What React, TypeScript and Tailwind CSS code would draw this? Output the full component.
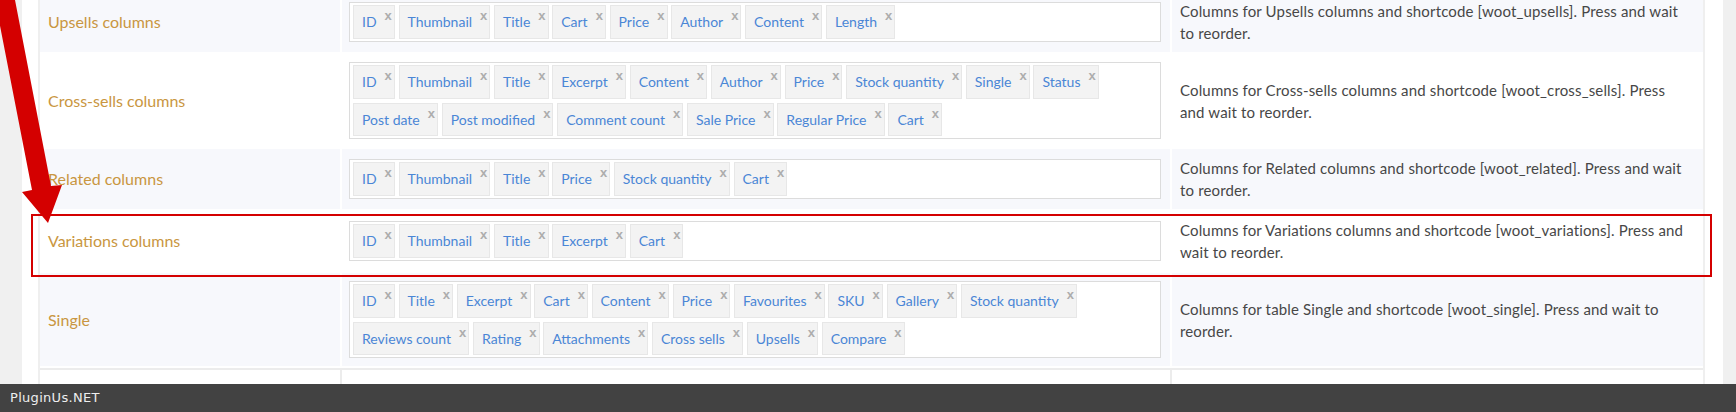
type Row = {
  label: string;
  chips: string[];
  desc: [string, string];
  shaded: boolean;
};

const rows: Row[] = [
  {
    label: 'Upsells columns',
    chips: ['ID', 'Thumbnail', 'Title', 'Cart', 'Price', 'Author', 'Content', 'Length'],
    desc: ['Columns for Upsells columns and shortcode [woot_upsells]. Press and wait', 'to reorder.'],
    shaded: true,
  },
  {
    label: 'Cross-sells columns',
    chips: [
      'ID',
      'Thumbnail',
      'Title',
      'Excerpt',
      'Content',
      'Author',
      'Price',
      'Stock quantity',
      'Single',
      'Status',
      'Post date',
      'Post modified',
      'Comment count',
      'Sale Price',
      'Regular Price',
      'Cart',
    ],
    desc: ['Columns for Cross-sells columns and shortcode [woot_cross_sells]. Press', 'and wait to reorder.'],
    shaded: false,
  },
  {
    label: 'Related columns',
    chips: ['ID', 'Thumbnail', 'Title', 'Price', 'Stock quantity', 'Cart'],
    desc: ['Columns for Related columns and shortcode [woot_related]. Press and wait', 'to reorder.'],
    shaded: true,
  },
  {
    label: 'Variations columns',
    chips: ['ID', 'Thumbnail', 'Title', 'Excerpt', 'Cart'],
    desc: ['Columns for Variations columns and shortcode [woot_variations]. Press and', 'wait to reorder.'],
    shaded: false,
  },
  {
    label: 'Single',
    chips: [
      'ID',
      'Title',
      'Excerpt',
      'Cart',
      'Content',
      'Price',
      'Favourites',
      'SKU',
      'Gallery',
      'Stock quantity',
      'Reviews count',
      'Rating',
      'Attachments',
      'Cross sells',
      'Upsells',
      'Compare',
    ],
    desc: ['Columns for table Single and shortcode [woot_single]. Press and wait to', 'reorder.'],
    shaded: true,
  },
];

function Chip({ text }: { text: string }) {
  return (
    <span className="flex h-[33.5px] items-start border border-[#e7e7e7] bg-[#f3f3f3] pl-[8px] pr-[2px]">
      <span className="text-[14px] leading-[31.5px] text-[#4a86d6]">{text}</span>
      <span className="ml-[8px] mt-[3px] font-['Liberation_Sans',sans-serif] text-[13px] font-bold leading-none text-[#adadad]">
        x
      </span>
    </span>
  );
}

function SettingRow({ row }: { row: Row }) {
  const bg = row.shaded ? 'bg-[#f7f8fc]' : 'bg-white';
  return (
    <div className="grid grid-cols-[300px_828px_531px] gap-x-[2px]">
      <div className={`flex items-center p-[8px] ${bg}`}>
        <span className="text-[16px] text-[#c99641]">{row.label}</span>
      </div>
      <div className={`flex items-center py-[8px] pl-[7px] pr-[9px] ${bg}`}>
        <div className="flex w-full flex-wrap gap-x-[3.7px] gap-y-[4px] border border-[#dcdcdc] bg-white px-[3px] py-[2px]">
          {row.chips.map((c) => (
            <Chip key={c} text={c} />
          ))}
        </div>
      </div>
      <div className={`flex items-center overflow-hidden p-[8px] ${bg}`}>
        <p className="whitespace-nowrap text-[15px] leading-[22px] tracking-[0.15px] text-[#474747]">
          <span className="block">{row.desc[0]}</span>
          <span className="block">{row.desc[1]}</span>
        </p>
      </div>
    </div>
  );
}

export default function App() {
  return (
    <div className="relative flex h-[412px] w-[1736px] flex-col overflow-hidden bg-[#f0f0f0] font-['Lato',sans-serif]">
      <div className="flex min-h-0 flex-1">
        <div className="w-[22px] shrink-0" />
        <div className="w-[1701px] shrink-0 overflow-hidden bg-white pl-[16px] pr-[18px]">
          <div className="-mt-[8px] flex flex-col gap-y-[2px] border-x-2 border-[#efefef]">
            {rows.map((r) => (
              <SettingRow key={r.label} row={r} />
            ))}
            <div className="grid h-[60px] grid-cols-[300px_828px_531px] gap-x-[2px] bg-[#ececec] pt-[2px]">
              <div className="bg-white" />
              <div className="bg-white" />
              <div className="bg-white" />
            </div>
          </div>
        </div>
        <div className="flex-1" />
      </div>

      <footer className="flex h-[28px] shrink-0 items-center bg-[#424242] px-[10px] font-['DejaVu_Sans',sans-serif] text-[13px] tracking-[0.3px] text-[#eeeeee]">
        PluginUs.NET
      </footer>

      {/* annotation: highlight box around the Variations row */}
      <div className="pointer-events-none absolute left-[31px] top-[214px] h-[63px] w-[1681px] border-2 border-[#d40000]" />

      {/* annotation: arrow pointing at it */}
      <svg
        className="pointer-events-none absolute left-0 top-0"
        width="80"
        height="230"
        viewBox="0 0 80 230"
      >
        <polygon points="-5,0 15,0 51,186 62,185 48,223 22,192 32,190" fill="#d40000" />
      </svg>
    </div>
  );
}
